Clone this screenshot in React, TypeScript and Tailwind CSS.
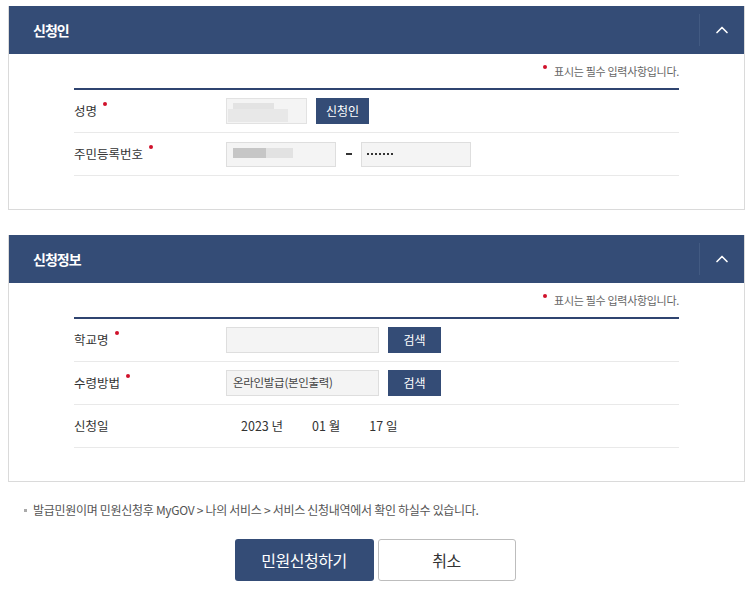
import { ChevronUp } from 'lucide-react';

const font = { fontFamily: '"Noto Sans CJK KR", "Noto Sans", sans-serif' };

function Dot() {
  return <span className="inline-block w-[4px] h-[4px] rounded-full bg-[#d0112b] ml-[6px] relative -top-[7px]" />;
}

function PanelHeader({ title }: { title: string }) {
  return (
    <div className="h-[48px] bg-[#344c76] flex items-center">
      <h2 className="flex-1 pl-[24px] text-white text-[14px] font-bold tracking-[-1px]">{title}</h2>
      <div className="h-[32px] w-px bg-[#425a82]" />
      <div className="w-[44px] flex items-center justify-center text-white">
        <ChevronUp size={20} strokeWidth={2} />
      </div>
    </div>
  );
}

function Note() {
  return (
    <div className="h-[34px] flex items-center justify-end">
      <span className="inline-block w-[4px] h-[4px] rounded-full bg-[#d0112b] mr-[7px] relative -top-[4px]" />
      <span className="text-[11px] text-[#666] tracking-[-0.3px]">표시는 필수 입력사항입니다.</span>
    </div>
  );
}

function Row({ label, required, children }: { label: string; required?: boolean; children: React.ReactNode }) {
  return (
    <div className="h-[43px] border-b border-[#e9e9e9] flex items-center">
      <div className="w-[152px] flex items-center text-[12.5px] text-[#333]">
        {label}
        {required && <Dot />}
      </div>
      <div className="flex items-center">{children}</div>
    </div>
  );
}

function NavyBtn({ children }: { children: React.ReactNode }) {
  return (
    <button className="h-[26px] w-[53px] bg-[#344c76] text-white text-[12px] flex items-center justify-center">
      {children}
    </button>
  );
}

export default function App() {
  return (
    <div className="w-[750px] h-[590px] bg-white pt-[6px]" style={font}>
      <section className="ml-[8px] w-[737px] border border-t-0 border-[#dadada]">
        <PanelHeader title="신청인" />
        <div className="px-[65px] pb-[33px]">
          <Note />
          <div className="border-t-2 border-[#2f4470]">
            <Row label="성명" required>
              <div className="relative w-[81px] h-[26px] bg-[#f4f4f4] border border-[#e2e2e2]">
                <div className="absolute left-[6px] top-[4px] w-[41px] h-[8px] bg-[#e3e3e3]" />
                <div className="absolute left-[1px] top-[10px] w-[60px] h-[13px] bg-[#e8e8e8]" />
              </div>
              <div className="ml-[9px]">
                <NavyBtn>신청인</NavyBtn>
              </div>
            </Row>
            <Row label="주민등록번호" required>
              <div className="relative w-[110px] h-[25px] bg-[#f4f4f4] border border-[#dedede]">
                <div className="absolute left-[6px] top-[5px] w-[33px] h-[10px] bg-[#c6c6c6]" />
                <div className="absolute left-[39px] top-[5px] w-[27px] h-[10px] bg-[#e2e2e2]" />
              </div>
              <div className="w-[25px] flex justify-center">
                <span className="w-[6px] h-[2px] bg-[#333]" />
              </div>
              <div className="w-[110px] h-[25px] bg-[#f4f4f4] border border-[#dedede] flex items-center gap-[2px] pl-[5px]">
                {[0, 1, 2, 3, 4, 5, 6].map((i) => (
                  <span key={i} className="w-[2px] h-[2px] bg-[#333]" />
                ))}
              </div>
            </Row>
          </div>
        </div>
      </section>

      <section className="ml-[8px] mt-[25px] w-[737px] border border-t-0 border-[#dadada]">
        <PanelHeader title="신청정보" />
        <div className="px-[65px] pb-[33px]">
          <Note />
          <div className="border-t-2 border-[#2f4470]">
            <Row label="학교명" required>
              <div className="w-[153px] h-[26px] bg-[#f4f4f4] border border-[#dedede]" />
              <div className="ml-[9px]">
                <NavyBtn>검색</NavyBtn>
              </div>
            </Row>
            <Row label="수령방법" required>
              <div className="w-[153px] h-[26px] bg-[#f4f4f4] border border-[#dedede] flex items-center pl-[6px] text-[11.5px] text-[#444] tracking-[-0.3px]">
                온라인발급(본인출력)
              </div>
              <div className="ml-[9px]">
                <NavyBtn>검색</NavyBtn>
              </div>
            </Row>
            <Row label="신청일">
              <div className="flex items-center gap-[29px] pl-[15px] text-[12.5px] text-[#333]">
                <span>2023 년</span>
                <span>01 월</span>
                <span>17 일</span>
              </div>
            </Row>
          </div>
        </div>
      </section>

      <p className="mt-[20px] pl-[24px] h-[16px] flex items-center text-[12px] text-[#555] tracking-[-0.3px]">
        <span className="inline-block w-[3px] h-[3px] bg-[#aaa] mr-[6px]" />
        발급민원이며 민원신청후 MyGOV &gt; 나의 서비스 &gt; 서비스 신청내역에서 확인 하실수 있습니다.
      </p>

      <div className="mt-[21px] flex justify-center gap-[4px]">
        <button className="w-[139px] h-[42px] rounded-[3px] bg-[#344c76] text-white text-[16px] tracking-[-0.5px]">
          민원신청하기
        </button>
        <button className="w-[138px] h-[42px] rounded-[3px] bg-white border border-[#bdbdbd] text-[#333] text-[16px] tracking-[-0.5px]">
          취소
        </button>
      </div>
    </div>
  );
}
